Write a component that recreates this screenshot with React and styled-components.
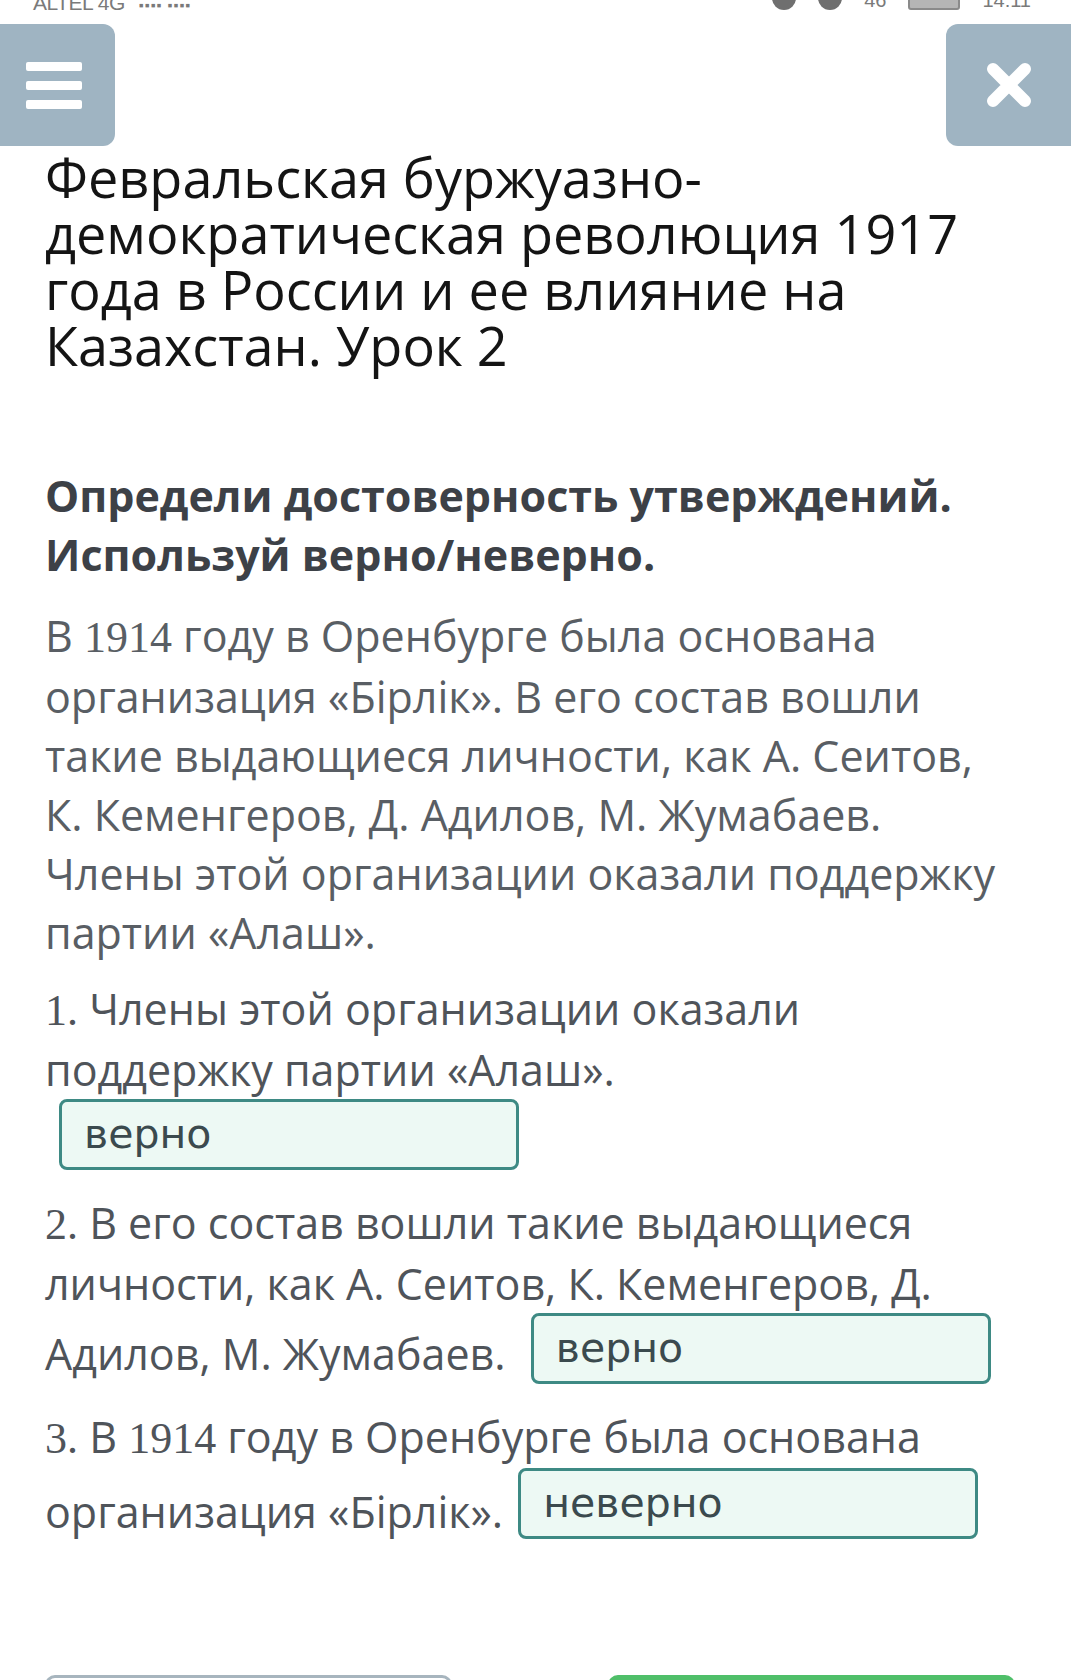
import React from 'react'
import styled, { createGlobalStyle } from 'styled-components'

const GlobalStyle = createGlobalStyle`
  body {
    margin: 0;
    background: #fff;
    font-family: 'Open Sans', 'Noto Sans', sans-serif;
  }
`

const Page = styled.div`
  width: 1071px;
  height: 1680px;
  overflow: hidden;
  background: #fff;
`

const StatusBar = styled.div`
  height: 22px;
  display: flex;
  justify-content: space-between;
  align-items: flex-end;
  padding: 0 40px 0 33px;
  overflow: hidden;
  color: #7a7a7a;
`

const Carrier = styled.span`
  font-family: 'Liberation Sans', sans-serif;
  font-size: 21px;
  line-height: 21px;
  margin-bottom: 6px;
  letter-spacing: -0.5px;

  b {
    font-size: 14px;
    letter-spacing: 1px;
    margin-left: 14px;
  }
`

const StatusIcons = styled.div`
  display: flex;
  align-items: flex-end;
  gap: 22px;
  margin-bottom: 12px;
  font-family: 'Liberation Sans', sans-serif;
  font-size: 20px;
  line-height: 20px;
`

const Dot = styled.span`
  width: 24px;
  height: 24px;
  border-radius: 50%;
  background: #6f6f6f;
`

const Battery = styled.span`
  width: 48px;
  height: 22px;
  border: 2px solid #8a8a8a;
  background: #b5b5b5;
  border-radius: 3px;
`

const TopBar = styled.div`
  display: flex;
  justify-content: space-between;
  margin-top: 2px;
`

const IconButton = styled.button`
  width: ${p => p.$w}px;
  height: 122px;
  border: none;
  background: #9fb4c2;
  border-radius: ${p => (p.$side === 'left' ? '0 12px 12px 0' : '12px 0 0 12px')};
  display: flex;
  align-items: center;
  justify-content: center;
  padding: 0;
`

const Burger = styled.span`
  display: flex;
  flex-direction: column;
  gap: 10px;
  margin-right: 8px;

  i {
    display: block;
    width: 56px;
    height: 9px;
    border-radius: 2px;
    background: #fff;
  }
`

const Content = styled.main`
  padding: 0 56px 0 45px;
`

const Title = styled.h1`
  margin: 3px 0 0;
  font-size: 54px;
  line-height: 56px;
  font-weight: 400;
  color: #141414;
`

const Instruction = styled.h2`
  margin: 93px 0 0;
  font-size: 43px;
  line-height: 59px;
  font-weight: 700;
  color: #3d4147;
`

const Passage = styled.p`
  margin: 22px 0 0;
  font-size: 43px;
  line-height: 59px;
  color: #595e64;
`

const Statement = styled.p`
  margin: ${p => (p.$first ? '17px' : '23px')} 0 0;
  font-size: 43px;
  line-height: 59px;
  color: #4f545a;
`

const Num = styled.span`
  font-family: 'Liberation Serif', 'DejaVu Serif', serif;
  font-size: 44px;
`

const Answer = styled.span`
  display: inline-block;
  box-sizing: border-box;
  width: 460px;
  height: 71px;
  margin-left: ${p => p.$gap}px;
  padding: 9px 22px;
  border: 3px solid #3e8a84;
  border-radius: 8px;
  background: #edf9f4;
  font-family: 'DejaVu Sans', sans-serif;
  font-size: 41px;
  line-height: 47px;
  color: #3b4a4e;
  vertical-align: ${p => p.$lift}px;
`

const Footer = styled.div`
  display: flex;
  justify-content: space-between;
  margin-top: 134px;
`

const NavButton = styled.div`
  width: 407px;
  height: 70px;
  box-sizing: border-box;
  border-radius: 10px;
  border: 3px solid ${p => (p.$primary ? '#4fbf69' : '#a7b5be')};
  background: ${p => (p.$primary ? '#4fbf69' : '#fff')};
`

export default function App() {
  return (
    <Page>
      <GlobalStyle />
      <StatusBar>
        <Carrier>
          ALTEL 4G<b>▪▪▪▪ ▪▪▪▪</b>
        </Carrier>
        <StatusIcons>
          <Dot />
          <Dot />
          <span>46</span>
          <Battery />
          <span>14:11</span>
        </StatusIcons>
      </StatusBar>

      <TopBar>
        <IconButton $side="left" $w={115} aria-label="Меню">
          <Burger>
            <i />
            <i />
            <i />
          </Burger>
        </IconButton>
        <IconButton $side="right" $w={125} aria-label="Закрыть">
          <svg width="48" height="48" viewBox="0 0 48 48">
            <path
              d="M8 8 L40 40 M40 8 L8 40"
              stroke="#fff"
              strokeWidth="12"
              strokeLinecap="round"
              fill="none"
            />
          </svg>
        </IconButton>
      </TopBar>

      <Content>
        <Title>
          Февральская буржуазно-демократическая революция 1917 года в России и ее влияние на
          Казахстан. Урок 2
        </Title>

        <Instruction>
          Определи достоверность утверждений.
          <br />
          Используй верно/неверно.
        </Instruction>

        <Passage>
          В <Num>1914</Num> году в Оренбурге была основана организация «Бірлік». В его состав вошли
          такие выдающиеся личности, как А. Сеитов, К. Кеменгеров, Д. Адилов, М. Жумабаев. Члены этой
          организации оказали поддержку партии «Алаш».
        </Passage>

        <Statement $first>
          <Num>1.</Num> Члены этой организации оказали поддержку партии «Алаш».{' '}
          <Answer $gap={14} $lift={8}>верно</Answer>
        </Statement>

        <Statement>
          <Num>2.</Num> В его состав вошли такие выдающиеся личности, как А. Сеитов, К. Кеменгеров, Д.
          Адилов, М. Жумабаев. <Answer $gap={14} $lift={8}>верно</Answer>
        </Statement>

        <Statement>
          <Num>3.</Num> В <Num>1914</Num> году в Оренбурге была основана организация «Бірлік».{' '}
          <Answer $gap={4} $lift={11}>неверно</Answer>
        </Statement>

        <Footer>
          <NavButton />
          <NavButton $primary />
        </Footer>
      </Content>
    </Page>
  )
}
